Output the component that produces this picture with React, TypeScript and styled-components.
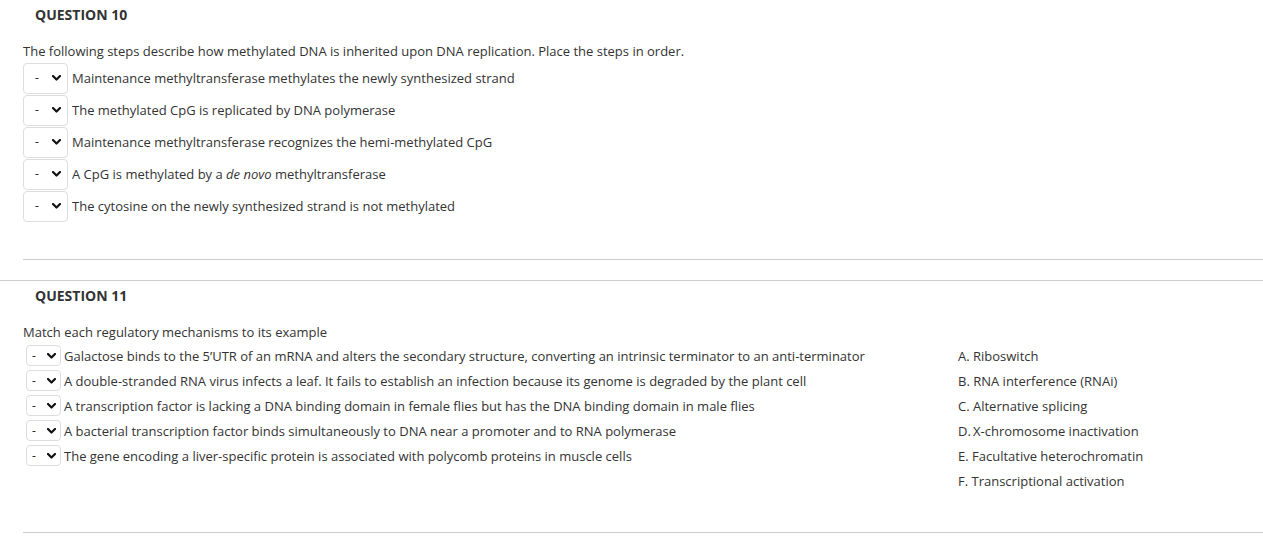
import React from "react";
import styled, { createGlobalStyle } from "styled-components";

const GlobalStyle = createGlobalStyle`
  html, body { margin: 0; padding: 0; background: #ffffff; }
  body {
    font-family: "Open Sans", "Liberation Sans", Arial, sans-serif;
    color: #333333;
    font-size: 13px;
  }
`;

const Page = styled.div`
  display: flex;
  flex-direction: column;
  gap: 20px;
  width: 1263px;
`;

const Question = styled.section<{ $topRule?: boolean }>`
  display: flex;
  flex-direction: column;
  border-top: ${(p) => (p.$topRule ? "1px solid #cccccc" : "none")};
`;

const Heading = styled.h3`
  margin: 0;
  padding: 6px 0 0 35px;
  font-size: 14px;
  line-height: 18px;
  font-weight: 700;
  color: #333333;
`;

const Body = styled.div<{ $bottomPad: number }>`
  margin: 18px 0 0 23px;
  padding-bottom: ${(p) => p.$bottomPad}px;
  border-bottom: 1px solid #cccccc;
  display: flex;
  flex-direction: column;
`;

const Prompt = styled.p`
  margin: 0;
  font-size: 13px;
  line-height: 18px;
`;

const RowList = styled.div<{ $gapTop: number }>`
  display: flex;
  flex-direction: column;
  margin-top: ${(p) => p.$gapTop}px;
`;

const Row = styled.div<{ $height: number; $gap: number; $indent: number }>`
  display: flex;
  align-items: center;
  height: ${(p) => p.$height}px;
  gap: ${(p) => p.$gap}px;
  padding-left: ${(p) => p.$indent}px;
  font-size: 13px;
  line-height: 18px;
  white-space: nowrap;
`;

const SelectBox = styled.div<{ $w: number; $h: number; $dashPad: number }>`
  box-sizing: border-box;
  width: ${(p) => p.$w}px;
  height: ${(p) => p.$h}px;
  flex: none;
  border: 1px solid #dddddd;
  border-radius: 4px;
  background: #ffffff;
  display: flex;
  align-items: center;
  justify-content: space-between;
  padding: 0 ${(p) => (p.$w > 40 ? 6 : 4)}px 0 ${(p) => p.$dashPad}px;
  font-size: 12px;
  color: #222222;
`;

const Chevron = () => (
  <svg width="9" height="6" viewBox="0 0 9 6" aria-hidden="true">
    <polyline
      points="1,1 4.5,4.5 8,1"
      fill="none"
      stroke="#111111"
      strokeWidth="2.2"
      strokeLinecap="round"
      strokeLinejoin="round"
    />
  </svg>
);

const MatchGrid = styled.div`
  display: grid;
  grid-template-columns: 935px auto;
  margin-top: 2px;
`;

const AnswerList = styled.ol`
  list-style: none;
  margin: 0;
  padding: 0;
  display: flex;
  flex-direction: column;
`;

const Answer = styled.li`
  height: 25px;
  display: flex;
  align-items: center;
  font-size: 13px;
  white-space: nowrap;
`;

const q10Steps: React.ReactNode[] = [
  "Maintenance methyltransferase methylates the newly synthesized strand",
  "The methylated CpG is replicated by DNA polymerase",
  "Maintenance methyltransferase recognizes the hemi-methylated CpG",
  <>
    A CpG is methylated by a <em>de novo</em> methyltransferase
  </>,
  "The cytosine on the newly synthesized strand is not methylated",
];

const q11Items = [
  "Galactose binds to the 5\u2019UTR of an mRNA and alters the secondary structure, converting an intrinsic terminator to an anti-terminator",
  "A double-stranded RNA virus infects a leaf. It fails to establish an infection because its genome is degraded by the plant cell",
  "A transcription factor is lacking a DNA binding domain in female flies but has the DNA binding domain in male flies",
  "A bacterial transcription factor binds simultaneously to DNA near a promoter and to RNA polymerase",
  "The gene encoding a liver-specific protein is associated with polycomb proteins in muscle cells",
];

const q11Answers = [
  "A. Riboswitch",
  "B. RNA interference (RNAi)",
  "C. Alternative splicing",
  "D.\u2009X-chromosome inactivation",
  "E. Facultative heterochromatin",
  "F. Transcriptional activation",
];

export default function App() {
  return (
    <Page>
      <GlobalStyle />
      <Question>
        <Heading>QUESTION 10</Heading>
        <Body $bottomPad={37}>
          <Prompt>
            The following steps describe how methylated DNA is inherited upon DNA
            replication. Place the steps in order.
          </Prompt>
          <RowList $gapTop={2}>
            {q10Steps.map((s, i) => (
              <Row key={i} $height={32} $gap={4} $indent={0}>
                <SelectBox $w={45} $h={31} $dashPad={11}>
                  <span>-</span>
                  <Chevron />
                </SelectBox>
                <span>{s}</span>
              </Row>
            ))}
          </RowList>
        </Body>
      </Question>
      <Question $topRule>
        <Heading>QUESTION 11</Heading>
        <Body $bottomPad={39}>
          <Prompt>Match each regulatory mechanisms to its example</Prompt>
          <MatchGrid>
            <RowList $gapTop={0}>
              {q11Items.map((s, i) => (
                <Row key={i} $height={25} $gap={3} $indent={3}>
                  <SelectBox $w={35} $h={21} $dashPad={5}>
                    <span>-</span>
                    <Chevron />
                  </SelectBox>
                  <span>{s}</span>
                </Row>
              ))}
            </RowList>
            <AnswerList>
              {q11Answers.map((a) => (
                <Answer key={a}>{a}</Answer>
              ))}
            </AnswerList>
          </MatchGrid>
        </Body>
      </Question>
    </Page>
  );
}
